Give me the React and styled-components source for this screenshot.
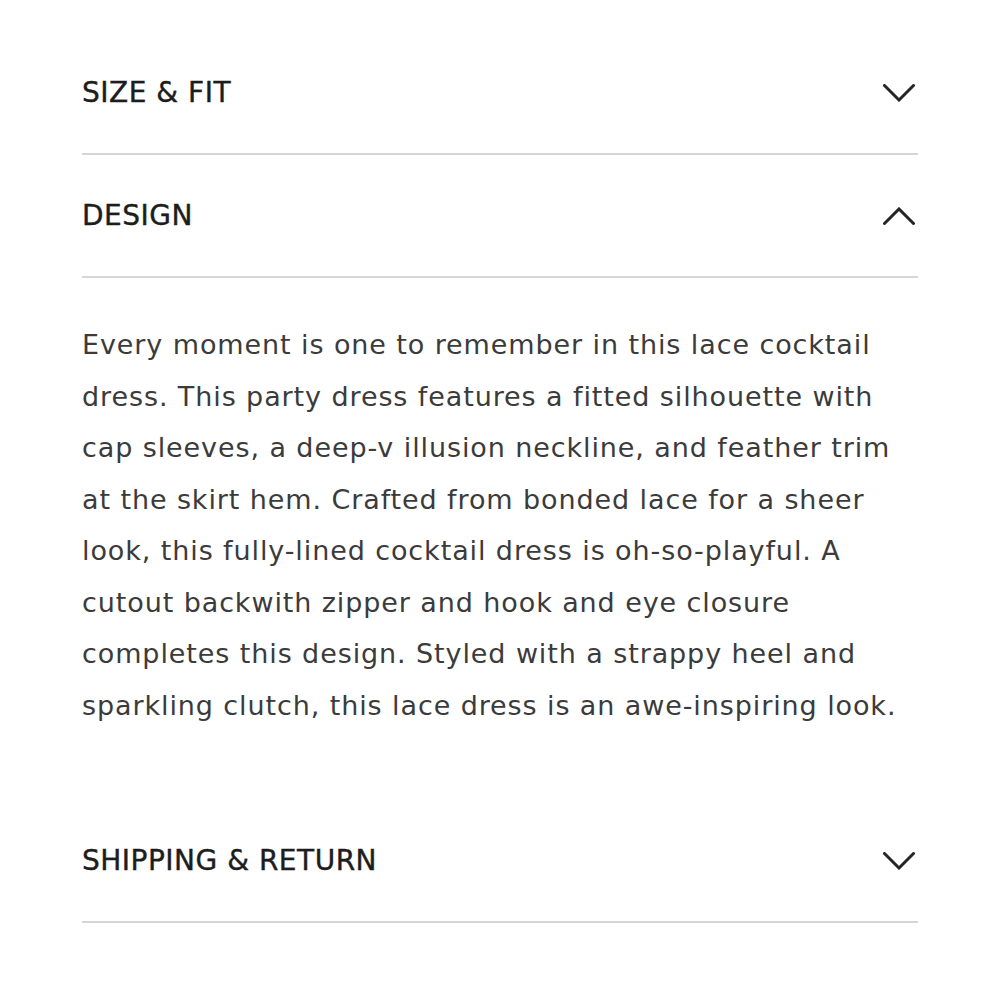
import React, { useState } from "react";
import styled, { createGlobalStyle } from "styled-components";

const GlobalStyle = createGlobalStyle`
  body {
    margin: 0;
    background: #ffffff;
    font-family: "DejaVu Sans", "Noto Sans", sans-serif;
  }
`;

const Page = styled.div`
  padding: 32px 82px 0;
`;

const Item = styled.section`
  display: flex;
  flex-direction: column;
`;

const Header = styled.button`
  display: flex;
  align-items: center;
  justify-content: space-between;
  height: 123px;
  padding: 0 3px 0 0;
  margin: 0;
  background: none;
  border: none;
  border-bottom: 2px solid #d6d6d6;
  cursor: pointer;
  text-align: left;
  font: inherit;
`;

const Title = styled.span`
  font-size: 28px;
  letter-spacing: 0.5px;
  color: #1d1d1d;
  text-transform: uppercase;
  -webkit-text-stroke: 0.4px #1d1d1d;
`;

const Body = styled.div`
  padding: 41px 10px 69px 0;
  font-size: 27px;
  letter-spacing: 0.9px;
  line-height: 51.5px;
  color: #3b3b3b;
`;

const Chevron = ({ open }) => (
  <svg width="32" height="18" viewBox="0 0 32 18" fill="none">
    <polyline
      points={open ? "1.5,16.5 16,2 30.5,16.5" : "1.5,1.5 16,16 30.5,1.5"}
      stroke="#252525"
      strokeWidth="3"
      strokeLinecap="round"
      strokeLinejoin="miter"
    />
  </svg>
);

const sections = [
  { title: "Size & Fit" },
  {
    title: "Design",
    text:
      "Every moment is one to remember in this lace cocktail dress. This party dress features a fitted silhouette with cap sleeves, a deep-v illusion neckline, and feather trim at the skirt hem. Crafted from bonded lace for a sheer look, this fully-lined cocktail dress is oh-so-playful. A cutout backwith zipper and hook and eye closure completes this design. Styled with a strappy heel and sparkling clutch, this lace dress is an awe-inspiring look.",
  },
  { title: "Shipping & Return" },
];

export default function App() {
  const [open, setOpen] = useState(1);
  return (
    <Page>
      <GlobalStyle />
      {sections.map((s, i) => (
        <Item key={s.title}>
          <Header onClick={() => setOpen(open === i ? -1 : i)}>
            <Title>{s.title}</Title>
            <Chevron open={open === i} />
          </Header>
          {open === i && s.text && <Body>{s.text}</Body>}
        </Item>
      ))}
    </Page>
  );
}
